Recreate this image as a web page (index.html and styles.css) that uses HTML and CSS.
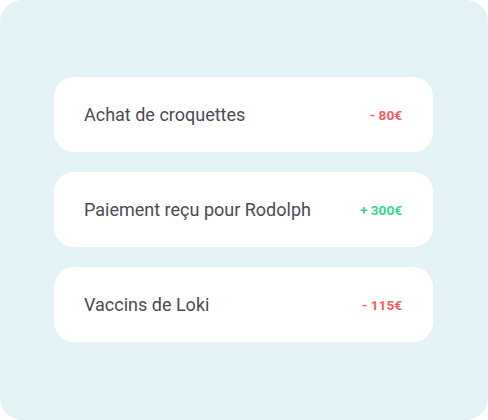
FILE: index.html
```html
<!DOCTYPE html>
<html lang="fr">
<head>
<meta charset="utf-8">
<link rel="stylesheet" href="styles.css">
</head>
<body>
<div class="panel">
  <ul class="list">
    <li class="item"><span class="label">Achat de croquettes</span><span class="amount neg">- 80€</span></li>
    <li class="item"><span class="label">Paiement reçu pour Rodolph</span><span class="amount pos">+ 300€</span></li>
    <li class="item"><span class="label">Vaccins de Loki</span><span class="amount neg">- 115€</span></li>
  </ul>
</div>
</body>
</html>
```
FILE: styles.css
```css
html, body {
  margin: 0;
  padding: 0;
  background: #ffffff;
}
body {
  font-family: Roboto, "Liberation Sans", sans-serif;
}
.panel {
  width: 488px;
  height: 420px;
  box-sizing: border-box;
  background: #e3f2f4;
  border-radius: 22px;
  padding: 77px 55px 0 54px;
}
.list {
  list-style: none;
  margin: 0;
  padding: 0;
  display: flex;
  flex-direction: column;
  gap: 20px;
}
.item {
  height: 75px;
  box-sizing: border-box;
  background: #ffffff;
  border-radius: 20px;
  display: flex;
  align-items: center;
  justify-content: space-between;
  padding: 0 31px 0 30px;
}
.label {
  font-size: 18px;
  color: #4a4a55;
  letter-spacing: 0;
}
.amount {
  font-size: 13.6px;
  font-weight: 700;
}
.neg { color: #fb5a5f; }
.pos { color: #3ad58f; }
```
